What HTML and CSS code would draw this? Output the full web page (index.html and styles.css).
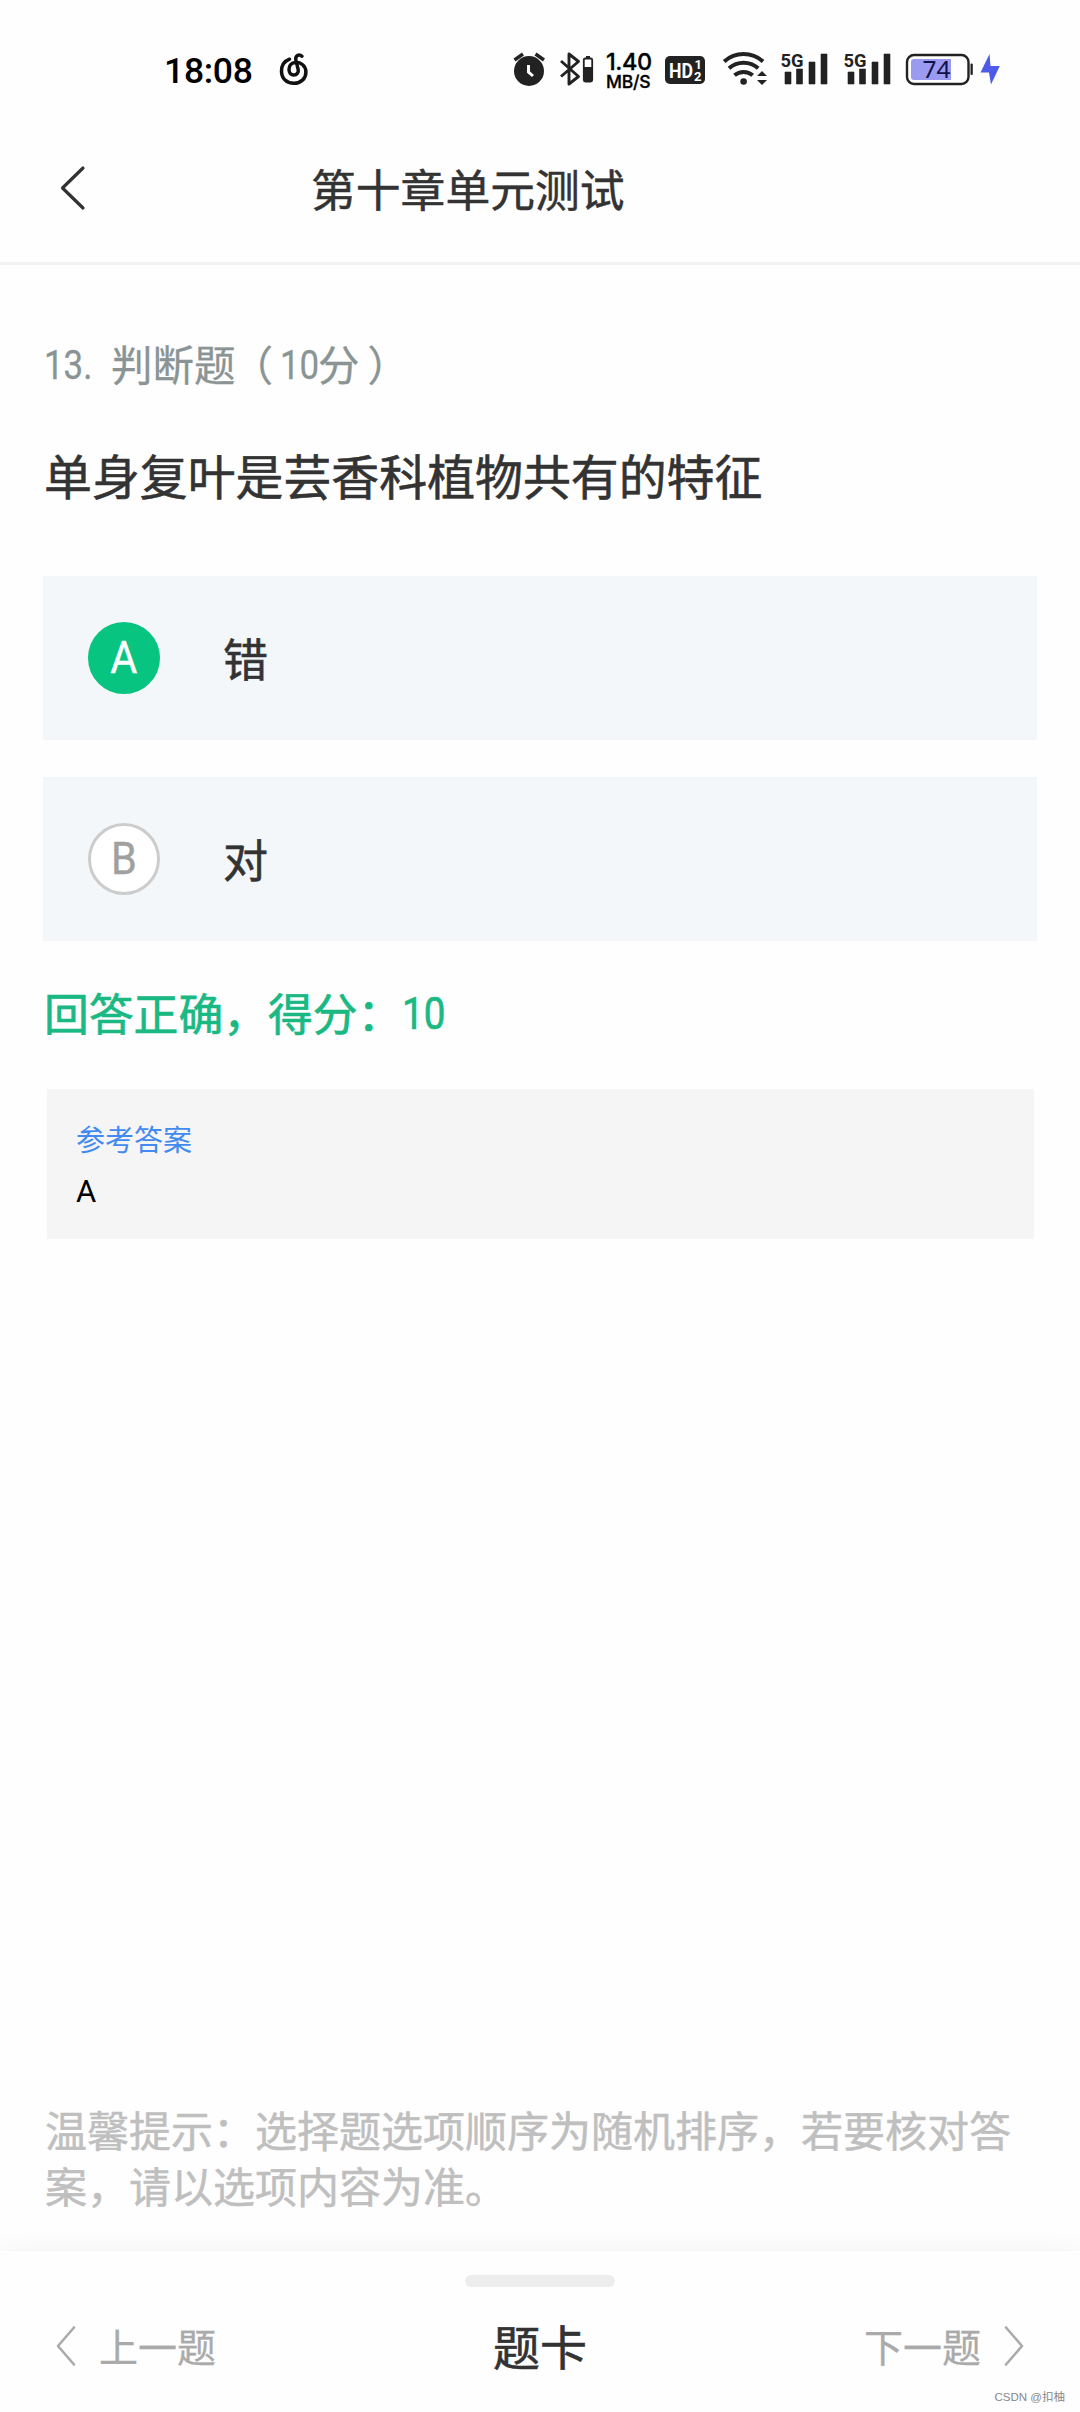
FILE: index.html
```html
<!DOCTYPE html>
<html lang="zh-CN">
<head>
<meta charset="utf-8">
<title>第十章单元测试</title>
<link rel="stylesheet" href="styles.css">
</head>
<body>
<div class="screen">
  <div class="status">
    <span class="clock">18:08</span>
    <svg class="music" width="30" height="40" viewBox="0 0 30 40" fill="none" stroke="#111" stroke-width="3.5" stroke-linecap="round">
      <path d="M10.500 9.200C5 11.300 2.500 15.500 2.500 21.300C2.500 28.500 7.800 33.300 14.800 33.300C21.900 33.300 26.900 28.600 26.900 22.200C26.900 15.800 22 12 16 12.400C12 12.800 10 16 10 19.500C10 22.800 12 25 14.800 25C17.800 25 19.800 22.700 19.200 19.600L16.900 10.200C15.900 5.500 20 3.500 23 6.200"/>
    </svg>
    <div class="indicators">
      <svg width="34" height="40" viewBox="512 50 34 40">
        <circle cx="529" cy="71" r="15" fill="#222"/>
        <path d="M514.500 60L523 54M535.500 54L544 60" stroke="#222" stroke-width="3.400"/>
        <path d="M528.500 65V72L533 76" fill="none" stroke="#fff" stroke-width="3"/>
      </svg>
      <svg class="bt" width="34" height="40" viewBox="560 50 34 40">
        <path d="M561 61L578.500 76.500L569 84V54L578.500 61.500L561 76.500" fill="none" stroke="#222" stroke-width="2.900" stroke-linejoin="round"/>
        <rect x="583.800" y="58.500" width="8.400" height="23" rx="1.500" fill="#fff" stroke="#222" stroke-width="1.800"/>
        <path d="M586 56h4v2h-4zM584 67h8v14h-8z" fill="#222"/>
      </svg>
      <div class="speed"><span class="rate">1.40</span><span class="unit">MB/S</span></div>
      <svg class="hd" width="40" height="40" viewBox="665 50 40 40">
        <rect x="665" y="56" width="40" height="28" rx="5" fill="#222"/>
        <text x="669" y="77.500" class="hd-text" textLength="24" lengthAdjust="spacingAndGlyphs">HD</text>
        <text x="694.500" y="69" class="hd-num">1</text>
        <text x="694" y="80.500" class="hd-num">2</text>
      </svg>
      <svg class="wifi" width="46" height="40" viewBox="722 50 46 40">
        <g fill="none" stroke="#222" stroke-width="4">
          <path d="M724.200 61.500A29 29 0 0 1 763 61.500"/>
          <path d="M729 68.300A22 22 0 0 1 758.200 68.300"/>
          <path d="M734.500 75.300A14 14 0 0 1 752.700 75.300"/>
        </g>
        <circle cx="743.600" cy="81.500" r="3.300" fill="#222"/>
        <path d="M757 76L762 71L767 76zM757 80H767L762 85z" fill="#222"/>
      </svg>
      <svg class="signal" width="48" height="40" viewBox="780 50 48 40">
        <text x="780.500" y="66.500" class="net" textLength="23" lengthAdjust="spacingAndGlyphs">5G</text>
        <path d="M785 72h6v12h-6zM796.500 69h6v15h-6zM809 62h6v22h-6zM821 54h6v30h-6z" fill="#222" stroke="#222" stroke-width=".6" stroke-linejoin="round"/>
      </svg>
      <svg class="signal second" width="48" height="40" viewBox="780 50 48 40">
        <text x="780.500" y="66.500" class="net" textLength="23" lengthAdjust="spacingAndGlyphs">5G</text>
        <path d="M785 72h6v12h-6zM796.500 69h6v15h-6zM809 62h6v22h-6zM821 54h6v30h-6z" fill="#222" stroke="#222" stroke-width=".6" stroke-linejoin="round"/>
      </svg>
      <svg class="battery" width="96" height="40" viewBox="905 50 96 40">
        <rect x="907" y="55" width="61.500" height="29" rx="7" fill="#fff" stroke="#222" stroke-width="2.400"/>
        <path d="M914 59H951V80H914Q911 80 911 77V62Q911 59 914 59z" fill="#9a9af0"/>
        <rect x="970.500" y="63.500" width="2.300" height="11.500" rx="1" fill="#222"/>
        <text x="922.500" y="78" class="level" textLength="28" lengthAdjust="spacingAndGlyphs">74</text>
        <path d="M989.500 54L980.500 72.500H989L991 84.500L999.800 66H990.500z" fill="#4d5be8"/>
      </svg>
    </div>
  </div>

  <header class="header">
    <svg class="back" width="26" height="46" viewBox="0 0 26 46" fill="none" stroke="#333" stroke-width="3.200" stroke-linecap="round" stroke-linejoin="round"><path d="M23 3L2.500 23L23 43"/></svg>
    <h1 class="title">第十章单元测试</h1>
  </header>

  <main class="content">
    <div class="kind"><span class="num">13.</span><span class="kind-name">判断题</span><span class="open">（</span><span class="points">10</span>分<span class="close">）</span></div>
    <p class="question">单身复叶是芸香科植物共有的特征</p>
    <div class="options">
      <div class="option"><span class="badge chosen"><span class="letter">A</span></span><span class="label">错</span></div>
      <div class="option"><span class="badge"><span class="letter">B</span></span><span class="label">对</span></div>
    </div>
    <p class="result">回答正确，得分：<span class="score">10</span></p>
    <section class="reference">
      <div class="reference-title">参考答案</div>
      <div class="reference-value">A</div>
    </section>
    <p class="tip">温馨提示：选择题选项顺序为随机排序，若要核对答案，请以选项内容为准。</p>
  </main>

  <footer class="sheet">
    <div class="handle"></div>
    <nav class="nav">
      <div class="step"><svg width="20" height="42" viewBox="0 0 20 42" fill="none" stroke="#aaa" stroke-width="2.600" stroke-linecap="round" stroke-linejoin="round"><path d="M18 2.500L2 21L18 39.500"/></svg><span class="prev-text">上一题</span></div>
      <div class="card">题卡</div>
      <div class="step next"><span class="next-text">下一题</span><svg width="20" height="42" viewBox="0 0 20 42" fill="none" stroke="#aaa" stroke-width="2.600" stroke-linecap="round" stroke-linejoin="round"><path d="M2 2.500L18 21L2 39.500"/></svg></div>
    </nav>
    <div class="watermark">CSDN @扣柚</div>
  </footer>
</div>
</body>
</html>
```
FILE: styles.css
```css
* { box-sizing: border-box; }
body {
  margin: 0;
  background: #fefefe;
  font-family: "Noto Sans CJK SC", sans-serif;
  color: #333;
}
h1, p { margin: 0; font-weight: 400; }
svg { display: block; flex: none; }

.screen {
  width: 1080px;
  height: 2412px;
  display: flex;
  flex-direction: column;
  overflow: hidden;
}

.status {
  height: 110px;
  padding: 50px 79px 0 164px;
  display: flex;
  align-items: flex-start;
  flex: none;
}
.clock {
  width: 115px;
  font: 500 35.500px/43px Roboto, sans-serif;
  letter-spacing: -.3px;
  color: #000;
}
.indicators { display: flex; margin-left: auto; }
.bt { margin-left: 14px; }
.speed {
  width: 47px;
  margin-left: 12px;
  color: #000;
  display: flex;
  flex-direction: column;
  font-family: Inter, sans-serif;
  white-space: nowrap;
  -webkit-text-stroke: .3px;
}
.rate { font-size: 23.500px; font-weight: 500; line-height: 24px; letter-spacing: -.4px; }
.unit { font-size: 17.500px; font-weight: 500; line-height: 16px; letter-spacing: -.2px; }
.hd { margin-left: 12px; }
.hd-text { font: 700 20px Roboto, sans-serif; fill: #fff; }
.hd-num { font: 700 13px Roboto, sans-serif; fill: #fff; }
.wifi { margin-left: 17px; }
.signal { margin-left: 12px; }
.second { margin-left: 15px; }
.net { font: 700 19px Roboto, sans-serif; fill: #222; }
.battery { margin-left: 14px; }
.level { font: 400 24px "Noto Sans", sans-serif; fill: #10104a; }

.header {
  height: 155px;
  padding: 0 60px;
  border-bottom: 3px solid #f2f2f2;
  display: flex;
  align-items: flex-start;
  flex: none;
}
.back { margin-top: 55px; }
.title {
  margin: 48px 0 0 225px;
  font-size: 44.800px;
  line-height: 60px;
  -webkit-text-stroke: .5px;
}

.content {
  flex: 1;
  padding: 68px 43px 0;
  display: flex;
  flex-direction: column;
}
.kind {
  height: 60px;
  padding-left: 1px;
  font-size: 41.500px;
  line-height: 60px;
  color: #8a9494;
  -webkit-text-stroke: .3px;
  display: flex;
}
.num, .points {
  font-family: Roboto, sans-serif;
  font-size: 40.500px;
  line-height: 65px;
  transform: scaleX(.86);
  transform-origin: left;
}
.num { width: 67px; }
.points { width: 38px; margin-left: 7px; }
.kind-name, .open { white-space: nowrap; }
.open { margin-left: -4px; }
.close { margin-left: 8px; }
.question {
  margin-top: 46px;
  padding-left: 1px;
  font-size: 47.900px;
  line-height: 70px;
  white-space: nowrap;
  -webkit-text-stroke: .6px;
}
.options {
  margin-top: 67px;
  display: flex;
  flex-direction: column;
  gap: 37px;
}
.option {
  height: 164px;
  padding-left: 45px;
  background: #f3f7fa;
  display: flex;
  align-items: center;
}
.badge {
  width: 72px;
  height: 72px;
  border: 3px solid #ccc;
  border-radius: 50%;
  background: #fff;
  color: #a0a0a0;
  display: flex;
  align-items: center;
  justify-content: center;
  font: 400 45px/50px Roboto, sans-serif;
}
.letter { transform: scaleX(.92); -webkit-text-stroke: .4px; }
.chosen { background: #07c481; border-color: #07c481; color: #fff; }
.label { margin-left: 63px; font-size: 45px; line-height: 60px; -webkit-text-stroke: .6px; }
.result {
  height: 60px;
  margin-top: 41px;
  padding-left: 1px;
  font-size: 44.800px;
  line-height: 60px;
  color: #1ab984;
  display: flex;
  -webkit-text-stroke: .7px;
}
.score {
  font-family: Roboto, sans-serif;
  line-height: 64px;
  transform: scaleX(.86);
  transform-origin: left;
}
.reference {
  width: 987px;
  height: 150px;
  margin: 47px 0 0 4px;
  padding: 27px 29px;
  background: #f5f5f5;
}
.reference-title { font-size: 29px; line-height: 44px; color: #438af0; }
.reference-value { margin-top: 10px; font: 400 31px/44px Roboto, sans-serif; color: #000; }
.tip {
  margin: auto 0 38px;
  padding-left: 2px;
  font-size: 42px;
  line-height: 56px;
  color: #bfbfbf;
  width: 990px;
  -webkit-text-stroke: .5px;
}

.sheet {
  height: 161px;
  flex: none;
  background: #fefefe;
  box-shadow: 0 0 24px rgba(0, 0, 0, .06);
  padding-top: 24px;
  display: flex;
  flex-direction: column;
}
.handle {
  width: 150px;
  height: 12px;
  margin: 0 auto;
  border-radius: 6px;
  background: #ededed;
}
.nav {
  height: 70px;
  margin-top: 23px;
  padding: 0 56px;
  display: grid;
  grid-template-columns: 1fr auto 1fr;
  align-items: center;
}
.step {
  display: flex;
  align-items: center;
  color: #aaa;
  font-size: 39px;
  line-height: 60px;
  -webkit-text-stroke: .3px;
}
.step svg { margin-top: 2px; }
.next { justify-content: flex-end; }
.prev-text { margin-left: 23px; }
.next-text { margin-right: 23px; }
.card { font-size: 47px; line-height: 70px; -webkit-text-stroke: .6px; }
.watermark {
  margin: auto 15px 5px auto;
  font-family: "Liberation Sans", "Noto Sans CJK SC", sans-serif;
  font-size: 11.500px;
  line-height: 20px;
  color: #888;
}
```
